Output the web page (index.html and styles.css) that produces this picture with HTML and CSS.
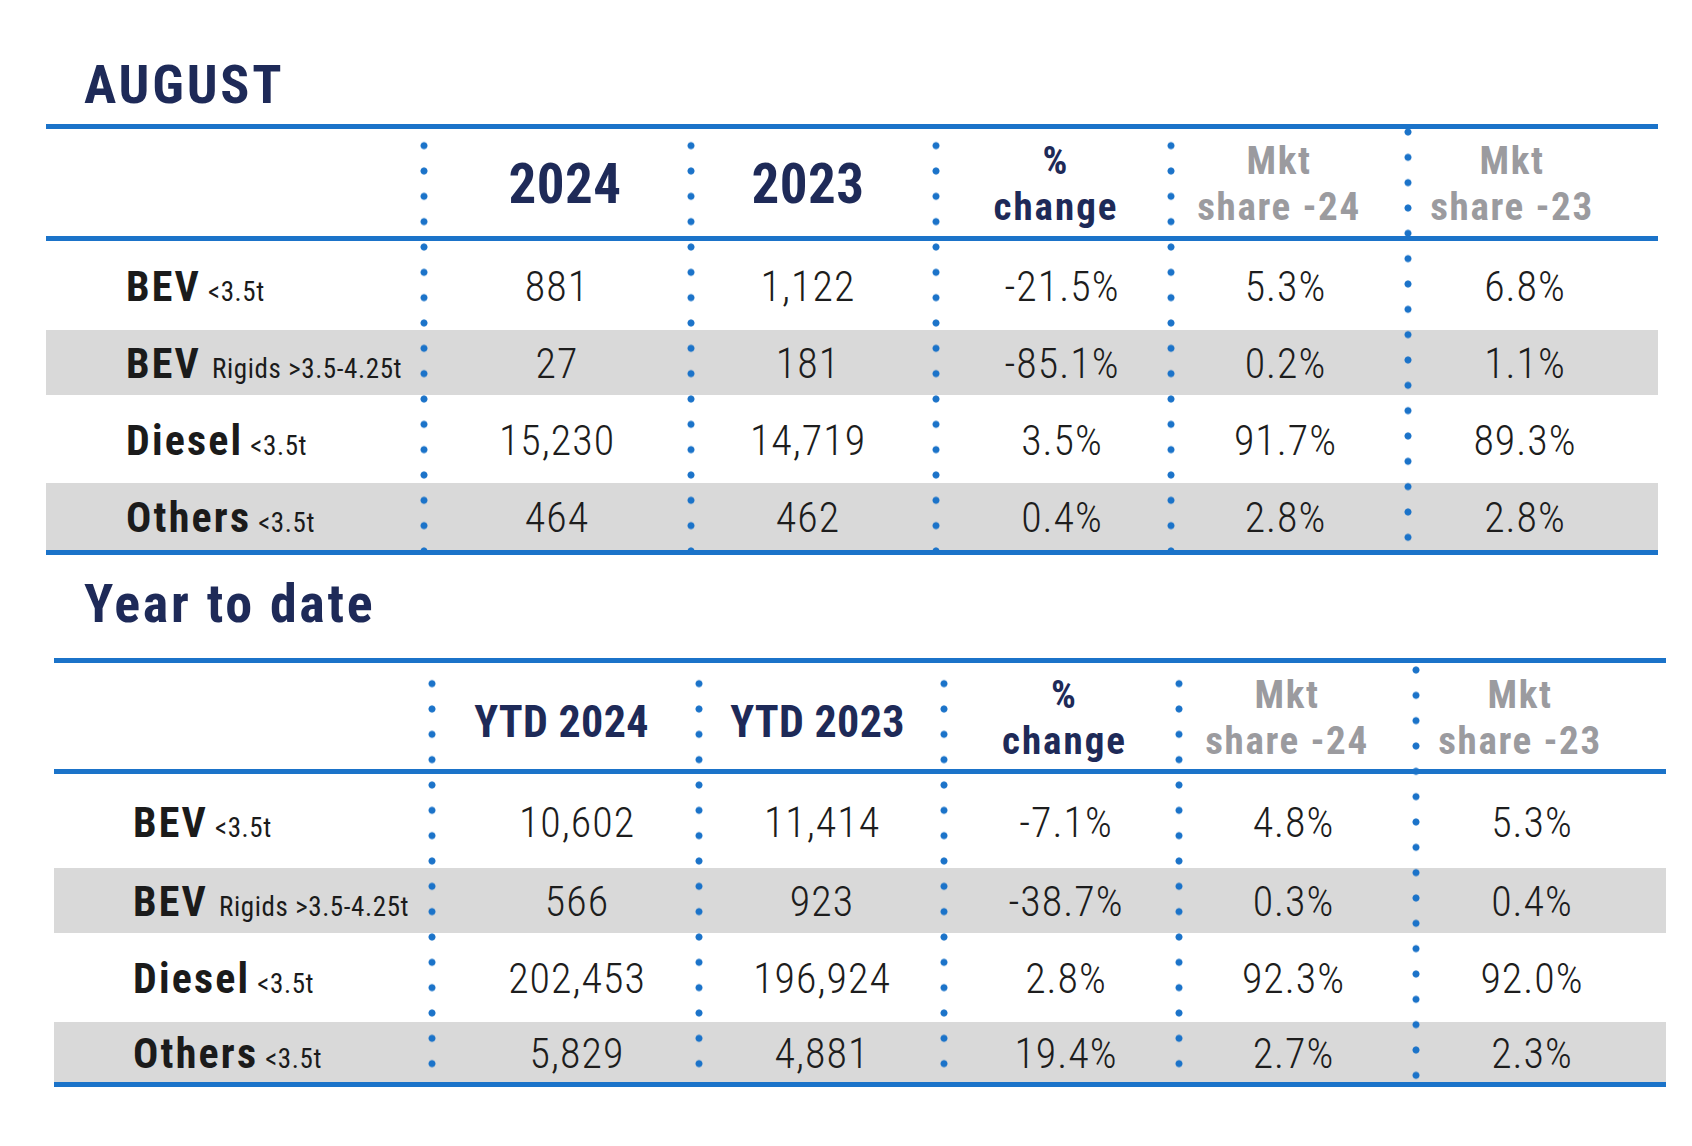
FILE: index.html
```html
<!DOCTYPE html>
<html lang="en">
<head>
<meta charset="utf-8">
<title>LCV registrations – August</title>
<link rel="stylesheet" href="styles.css">
</head>
<body>
<div class="page">
  <h1 class="title t-aug">AUGUST</h1>
  <div class="tbl t1">
    <div class="row hdr">
      <div class="cell lbl"></div>
      <div class="cell c1"><span class="yr">2024</span></div>
      <div class="cell c2"><span class="yr">2023</span></div>
      <div class="cell c3"><span class="h2l">%<br>change</span></div>
      <div class="cell c4"><span class="h2l mkt">Mkt<br>share -24</span></div>
      <div class="cell c5"><span class="h2l mkt">Mkt<br>share -23</span></div>
    </div>
    <div class="row r1">
      <div class="cell lbl"><span class="name"><b>BEV</b><small>&lt;3.5t</small></span></div>
      <div class="cell c1">881</div>
      <div class="cell c2">1,122</div>
      <div class="cell c3">-21.5%</div>
      <div class="cell c4">5.3%</div>
      <div class="cell c5">6.8%</div>
    </div>
    <div class="row r2 band">
      <div class="cell lbl"><span class="name"><b>BEV</b><small class="wide">Rigids &gt;3.5-4.25t</small></span></div>
      <div class="cell c1">27</div>
      <div class="cell c2">181</div>
      <div class="cell c3">-85.1%</div>
      <div class="cell c4">0.2%</div>
      <div class="cell c5">1.1%</div>
    </div>
    <div class="row r3">
      <div class="cell lbl"><span class="name"><b>Diesel</b><small>&lt;3.5t</small></span></div>
      <div class="cell c1">15,230</div>
      <div class="cell c2">14,719</div>
      <div class="cell c3">3.5%</div>
      <div class="cell c4">91.7%</div>
      <div class="cell c5">89.3%</div>
    </div>
    <div class="row r4 band">
      <div class="cell lbl"><span class="name"><b>Others</b><small>&lt;3.5t</small></span></div>
      <div class="cell c1">464</div>
      <div class="cell c2">462</div>
      <div class="cell c3">0.4%</div>
      <div class="cell c4">2.8%</div>
      <div class="cell c5">2.8%</div>
    </div>
  </div>

  <h1 class="title t-ytd">Year to date</h1>
  <div class="tbl t2">
    <div class="row hdr">
      <div class="cell lbl"></div>
      <div class="cell c1"><span class="ytd">YTD 2024</span></div>
      <div class="cell c2"><span class="ytd">YTD 2023</span></div>
      <div class="cell c3"><span class="h2l">%<br>change</span></div>
      <div class="cell c4"><span class="h2l mkt">Mkt<br>share -24</span></div>
      <div class="cell c5"><span class="h2l mkt">Mkt<br>share -23</span></div>
    </div>
    <div class="row r1">
      <div class="cell lbl"><span class="name"><b>BEV</b><small>&lt;3.5t</small></span></div>
      <div class="cell c1">10,602</div>
      <div class="cell c2">11,414</div>
      <div class="cell c3">-7.1%</div>
      <div class="cell c4">4.8%</div>
      <div class="cell c5">5.3%</div>
    </div>
    <div class="row r2 band">
      <div class="cell lbl"><span class="name"><b>BEV</b><small class="wide">Rigids &gt;3.5-4.25t</small></span></div>
      <div class="cell c1">566</div>
      <div class="cell c2">923</div>
      <div class="cell c3">-38.7%</div>
      <div class="cell c4">0.3%</div>
      <div class="cell c5">0.4%</div>
    </div>
    <div class="row r3">
      <div class="cell lbl"><span class="name"><b>Diesel</b><small>&lt;3.5t</small></span></div>
      <div class="cell c1">202,453</div>
      <div class="cell c2">196,924</div>
      <div class="cell c3">2.8%</div>
      <div class="cell c4">92.3%</div>
      <div class="cell c5">92.0%</div>
    </div>
    <div class="row r4 band">
      <div class="cell lbl"><span class="name"><b>Others</b><small>&lt;3.5t</small></span></div>
      <div class="cell c1">5,829</div>
      <div class="cell c2">4,881</div>
      <div class="cell c3">19.4%</div>
      <div class="cell c4">2.7%</div>
      <div class="cell c5">2.3%</div>
    </div>
  </div>
</div>
</body>
</html>
```
FILE: styles.css
```css
* { box-sizing: border-box; }

html, body {
  margin: 0;
  padding: 0;
  background: #ffffff;
}

body {
  font-family: "Roboto Condensed", "Roboto", sans-serif;
  font-stretch: condensed;
  color: #1d1d1d;
}

.page {
  width: 1692px;
  padding-top: 55px;
}

.title {
  margin: 0 0 0 84px;
  height: 60px;
  line-height: 60px;
  font-size: 54px;
  font-weight: 700;
  color: #1e2a58;
}

.t-aug { letter-spacing: 2.8px; }
.t-ytd { letter-spacing: 2.7px; margin-top: 19px; }

.tbl {
  width: 1612px;
  border-top: 5px solid #1b73c9;
  border-bottom: 5px solid #1b73c9;
}

.t1 { margin-left: 46px; margin-top: 9px; }
.t2 { margin-left: 54px; margin-top: 24px; }

.row {
  display: flex;
  align-items: stretch;
}

.band { background: #d9d9d9; }

.hdr { border-bottom: 5px solid #1b73c9; }

/* row heights and dot phases */
.t1 .hdr { height: 112px; --ph: 4px; }
.t1 .r1 { height: 89px; --ph: -6.67px; }
.t1 .r2 { height: 65px; --ph: 5.67px; }
.t1 .r3 { height: 88px; --ph: -8.67px; }
.t1 .r4 { height: 67px; --ph: 4.67px; }

.t2 .hdr { height: 111px; --ph: 8px; }
.t2 .r1 { height: 94px; --ph: -1.67px; }
.t2 .r2 { height: 65px; --ph: 5.67px; }
.t2 .r3 { height: 89px; --ph: -8.67px; }
.t2 .r4 { height: 60px; --ph: 3.67px; }

.cell {
  display: flex;
  align-items: center;
  justify-content: center;
  padding-top: 3px;
  font-size: 42px;
  font-weight: 300;
  letter-spacing: 1px;
  line-height: 1;
  white-space: nowrap;
  color: #1d1d1d;
  background-image: radial-gradient(circle at 4px 12.667px, #1b73c9 3.1px, rgba(27, 115, 201, 0) 3.9px);
  background-size: 8px 25.333px;
  background-repeat: repeat-y;
  background-position: 0 var(--ph);
}

.cell.lbl {
  width: 374px;
  justify-content: flex-start;
  padding-left: 80px;
  background: none;
  letter-spacing: 0;
}

.t2 .cell.lbl { padding-left: 79px; }

.c1 { width: 267px; }
.c2 { width: 245px; }
.c3 { width: 235px; }
.c4 { width: 237px; }
.c5 {
  width: 254px;
  background-position: 0 calc(var(--ph) - 13.67px);
}

/* horizontal centring of values */
.t1 .c1 { padding-left: 7px; }
.t1 .c2 { padding-right: 3px; }
.t1 .c3 { padding-left: 25px; }
.t1 .c5 { padding-right: 12px; }

.t2 .c1 { padding-left: 31px; }
.t2 .c2 { padding-left: 9px; }
.t2 .c3 { padding-left: 17px; }
.t2 .c5 { padding-right: 14px; }

/* header cells */
.t1 .hdr .c1 { padding-left: 23px; }
.t1 .hdr .c2 { padding-left: 0; padding-right: 3px; }
.t1 .hdr .c3 { padding-left: 13px; }
.t1 .hdr .c4 { padding-right: 13px; }
.t1 .hdr .c5 { padding-right: 38px; }

.t2 .hdr .c1 { padding-left: 0; padding-top: 12px; }
.t2 .hdr .c2 { padding-left: 0; padding-top: 12px; }
.t2 .hdr .c3 { padding-left: 14px; }
.t2 .hdr .c4 { padding-right: 13px; }
.t2 .hdr .c5 { padding-right: 38px; }

.name {
  display: block;
  line-height: 1;
}

.lbl b {
  font-weight: 700;
  font-size: 42px;
  letter-spacing: 2.2px;
  color: #1b1b1b;
}

.lbl small {
  font-size: 27px;
  font-weight: 400;
  letter-spacing: 0.6px;
  margin-left: 7px;
  color: #1b1b1b;
}

.lbl small.wide {
  margin-left: 11px;
}

.yr {
  font-size: 55px;
  font-weight: 700;
  letter-spacing: 0.5px;
  color: #1e2a58;
}

.ytd {
  font-size: 44px;
  font-weight: 700;
  letter-spacing: 0.3px;
  color: #1e2a58;
}

.h2l {
  display: block;
  text-align: center;
  font-size: 39px;
  line-height: 46px;
  font-weight: 700;
  letter-spacing: 2px;
  color: #1e2a58;
}

.h2l.mkt { color: #9b9b9f; letter-spacing: 1.6px; }
```
